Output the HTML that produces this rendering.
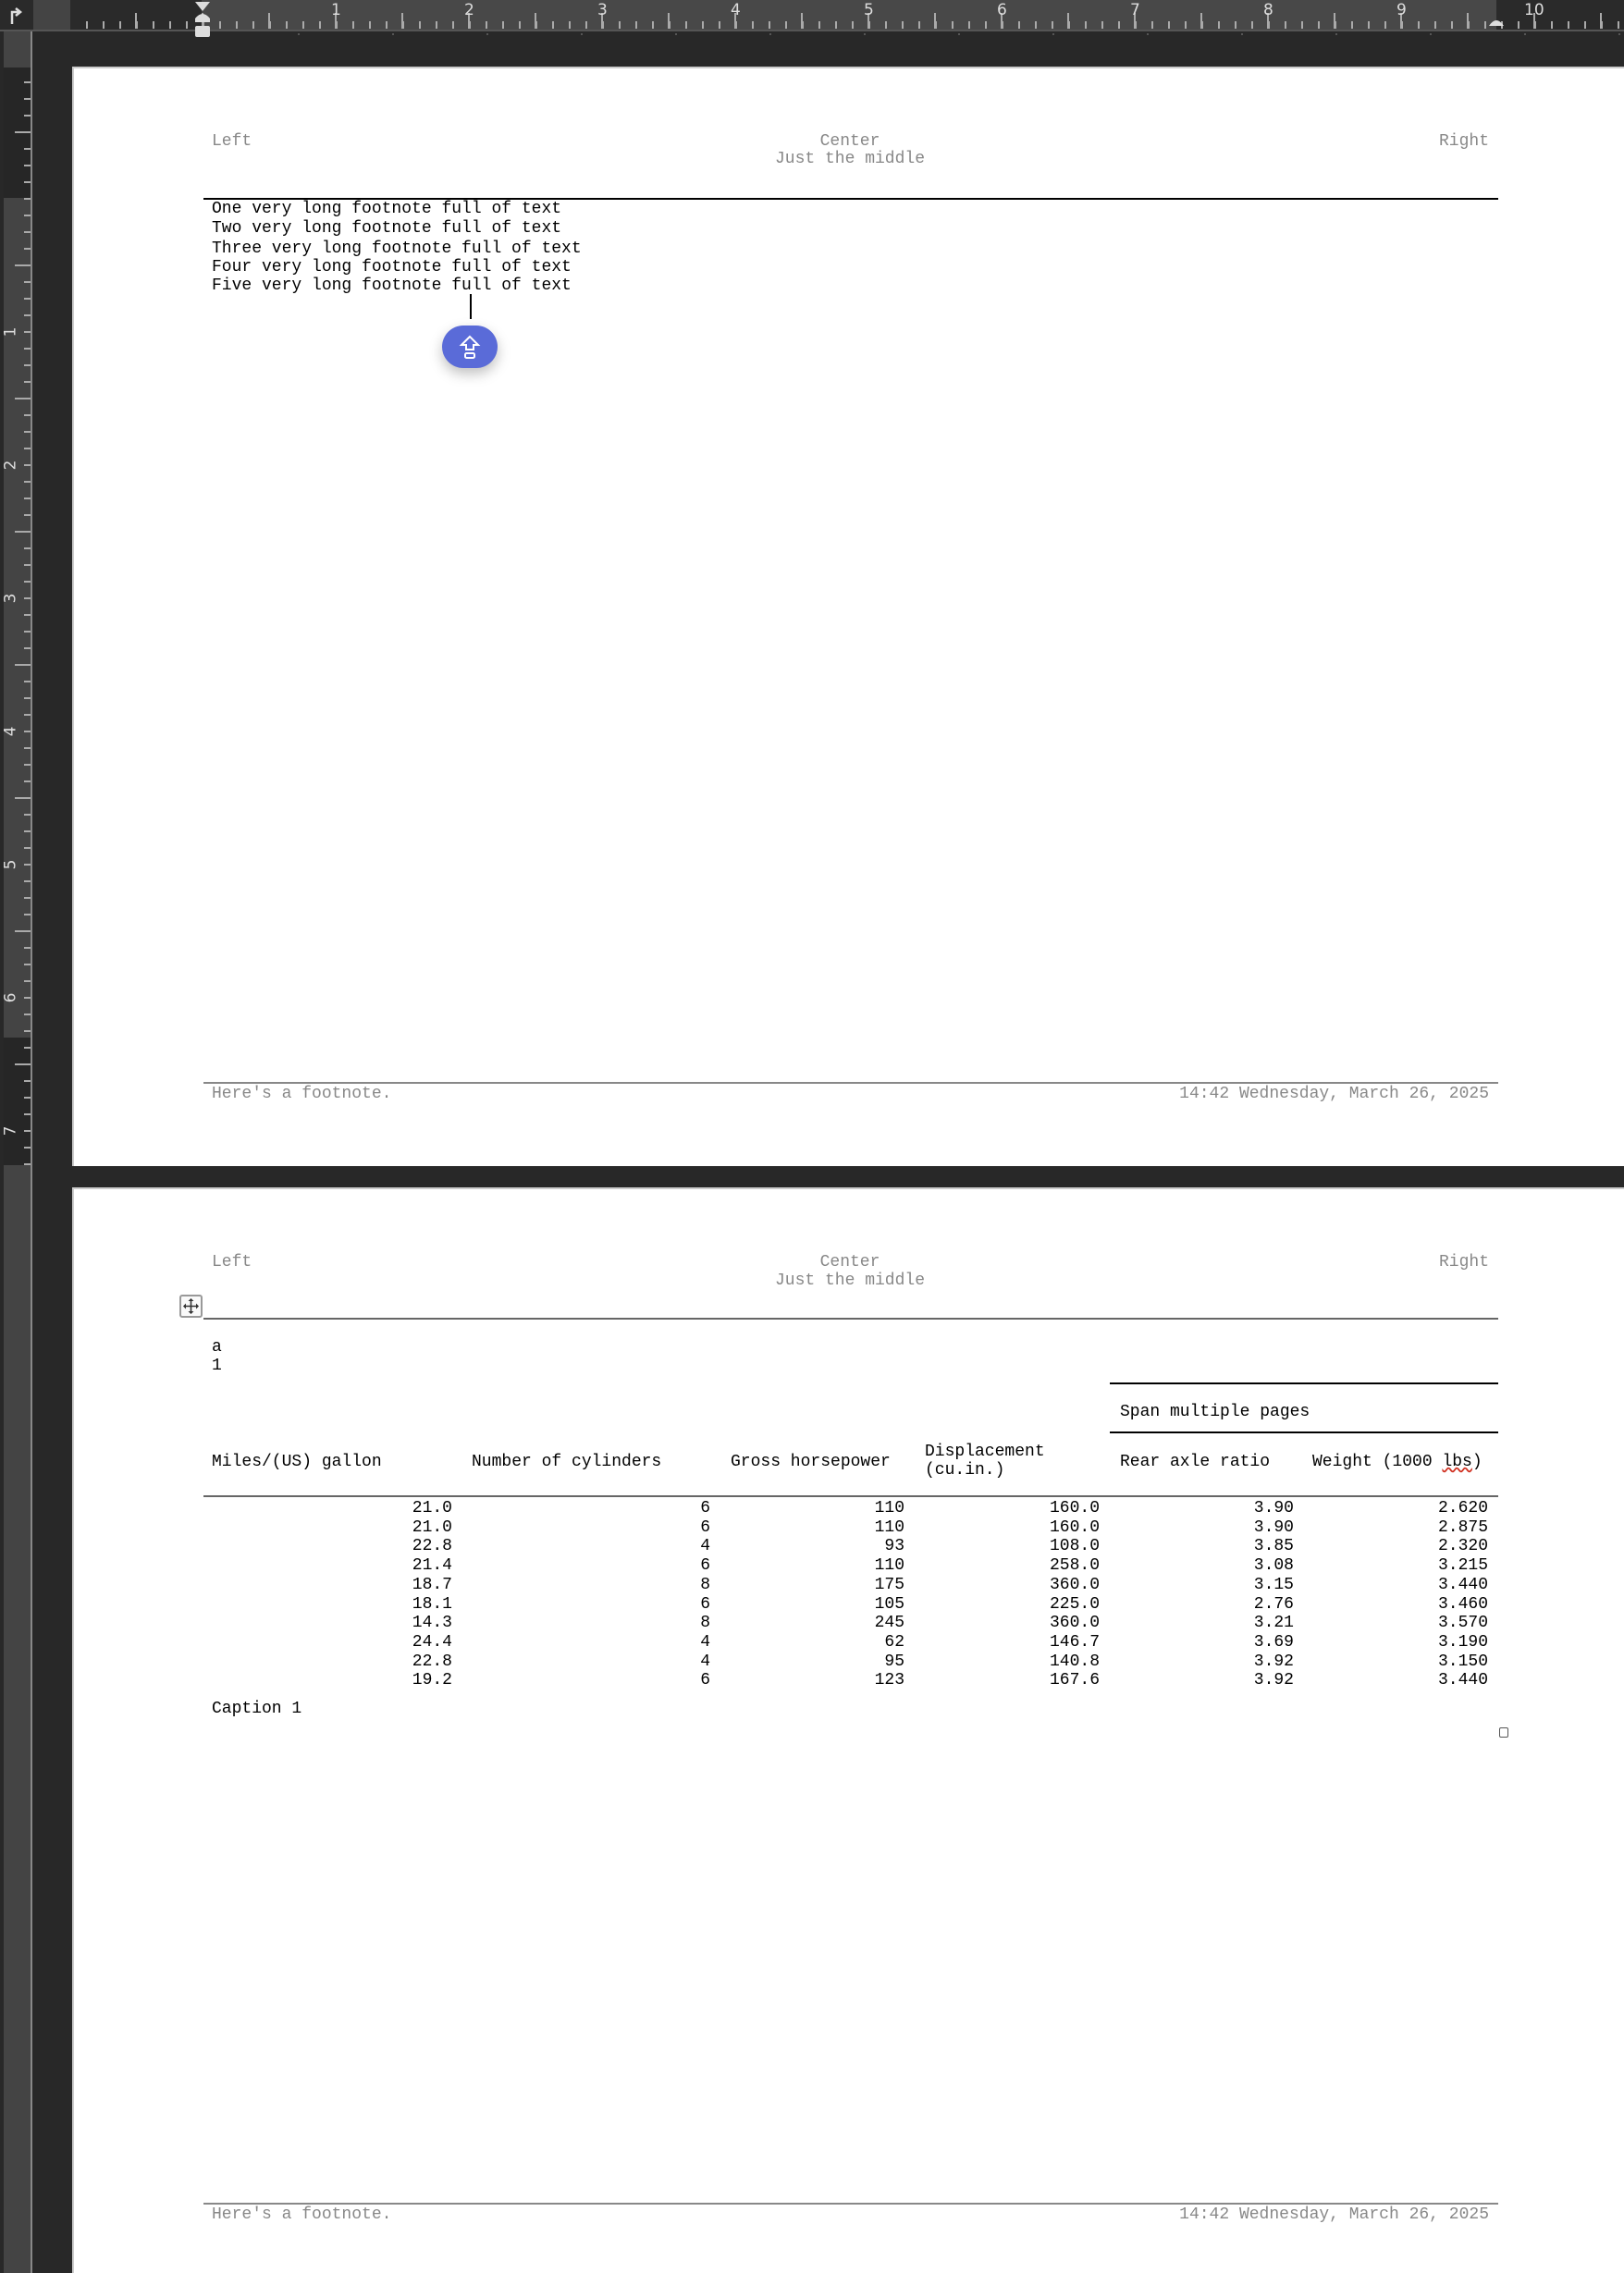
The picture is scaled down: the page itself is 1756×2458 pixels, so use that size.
<!DOCTYPE html>
<html><head><meta charset="utf-8"><style>
*{margin:0;padding:0;box-sizing:border-box}
body{width:1756px;height:2458px;background:#282828;position:relative;overflow:hidden;font-family:"Liberation Mono",monospace;font-size:18px}
.a{position:absolute;white-space:pre;line-height:20px;padding-top:2px}
.g{color:#888}
.r{text-align:right}
.page{position:absolute;left:78px;right:0;background:#fff;border-left:2px solid #ccc;border-top:2px solid #ccc}
.hr{position:absolute;height:2px;background:#000}
.num{position:absolute;color:#ddd;font-family:"DejaVu Sans","Liberation Sans",sans-serif;font-size:17px;line-height:20px}
</style></head><body>
<!-- top ruler -->
<div style="position:absolute;left:0;top:0;width:1756px;height:34px;background:#2a2a2a;border-bottom:2px solid #555"></div>
<div style="position:absolute;left:36px;top:0;width:40px;height:32px;background:#444"></div>
<div style="position:absolute;left:218px;top:0;width:1400px;height:32px;background:#484848"></div>
<div style="position:absolute;left:93px;top:23px;width:1663px;height:8px;background:repeating-linear-gradient(90deg,#aaa 0 2px,transparent 2px 18px)"></div>
<div style="position:absolute;left:146px;top:14px;width:1610px;height:17px;background:repeating-linear-gradient(90deg,#aaa 0 2px,transparent 2px 72px)"></div>
<div class="num" style="left:358px;top:1px">1</div><div class="num" style="left:502px;top:1px">2</div><div class="num" style="left:646px;top:1px">3</div><div class="num" style="left:790px;top:1px">4</div><div class="num" style="left:934px;top:1px">5</div><div class="num" style="left:1078px;top:1px">6</div><div class="num" style="left:1222px;top:1px">7</div><div class="num" style="left:1366px;top:1px">8</div><div class="num" style="left:1510px;top:1px">9</div><div class="num" style="left:1648px;top:1px">10</div>
<div style="position:absolute;left:120px;top:36px;width:1636px;height:2px;background:repeating-linear-gradient(90deg,transparent 0 100px,#555 100px 102px)"></div>
<svg style="position:absolute;left:0;top:0" width="1756" height="45">
<path d="M211 2h16l-8 10z M211 20 q8-10 16 0v4h-16z" fill="#ddd"/><rect x="211" y="28" width="16" height="12" rx="2" fill="#ddd"/>
<path d="M1610 28q8-12 16 0z" fill="#ddd"/>
<path d="M13 26V13h8M17 9l5 4-5 4" stroke="#ddd" stroke-width="2.5" fill="none"/>
</svg>
<!-- left ruler -->
<div style="position:absolute;left:4px;top:34px;width:31px;height:2424px;background:#444;border-right:2px solid #888"></div>
<div style="position:absolute;left:4px;top:73px;width:29px;height:141px;background:#262626"></div>
<div style="position:absolute;left:4px;top:1122px;width:29px;height:138px;background:#262626"></div>
<div style="position:absolute;left:26px;top:88px;width:7px;height:1172px;background:repeating-linear-gradient(180deg,#aaa 0 2px,transparent 2px 18px)"></div>
<div style="position:absolute;left:16px;top:142px;width:17px;height:1118px;background:repeating-linear-gradient(180deg,#aaa 0 2px,transparent 2px 144px)"></div>
<div class="num" style="left:6px;top:349px;transform:rotate(-90deg)">1</div><div class="num" style="left:6px;top:493px;transform:rotate(-90deg)">2</div><div class="num" style="left:6px;top:637px;transform:rotate(-90deg)">3</div><div class="num" style="left:6px;top:781px;transform:rotate(-90deg)">4</div><div class="num" style="left:6px;top:925px;transform:rotate(-90deg)">5</div><div class="num" style="left:6px;top:1069px;transform:rotate(-90deg)">6</div><div class="num" style="left:6px;top:1213px;transform:rotate(-90deg)">7</div>
<!-- page 1 -->
<div class="page" style="top:72px;height:1189px"></div>
<div class="a g" style="left:229px;top:141px">Left</div>
<div class="a g" style="left:619px;top:141px;width:600px;text-align:center">Center</div>
<div class="a g" style="left:619px;top:160px;width:600px;text-align:center">Just the middle</div>
<div class="a g r" style="left:1210px;top:141px;width:400px">Right</div>
<div class="hr" style="left:220px;top:214px;width:1400px"></div>
<div class="a" style="left:229px;top:214px">One very long footnote full of text</div>
<div class="a" style="left:229px;top:235px">Two very long footnote full of text</div>
<div class="a" style="left:229px;top:257px">Three very long footnote full of text</div>
<div class="a" style="left:229px;top:277px">Four very long footnote full of text</div>
<div class="a" style="left:229px;top:297px">Five very long footnote full of text</div>
<div style="position:absolute;left:508px;top:318px;width:2px;height:27px;background:#000"></div>
<div style="position:absolute;left:478px;top:352px;width:60px;height:46px;border-radius:23px;background:#5a6bd8;box-shadow:0 6px 14px rgba(0,0,0,.25)"></div>
<svg style="position:absolute;left:478px;top:352px" width="60" height="46"><path d="M30 12l-9 9h5v5h8v-5h5z" fill="none" stroke="#fff" stroke-width="2"/><rect x="25" y="30" width="10" height="5" rx="1.5" fill="none" stroke="#fff" stroke-width="2"/></svg>
<div style="position:absolute;left:220px;top:1170px;width:1400px;height:2px;background:#888"></div>
<div class="a g" style="left:229px;top:1171px">Here's a footnote.</div>
<div class="a g r" style="left:1110px;top:1171px;width:500px">14:42 Wednesday, March 26, 2025</div>
<!-- page 2 -->
<div class="page" style="top:1284px;height:1174px"></div>
<div class="a g" style="left:229px;top:1353px">Left</div>
<div class="a g" style="left:619px;top:1353px;width:600px;text-align:center">Center</div>
<div class="a g" style="left:619px;top:1373px;width:600px;text-align:center">Just the middle</div>
<div class="a g r" style="left:1210px;top:1353px;width:400px">Right</div>
<div style="position:absolute;left:194px;top:1400px;width:25px;height:25px;border:2px solid #999;border-radius:3px;background:#fafafa"></div>
<svg style="position:absolute;left:194px;top:1400px" width="25" height="25"><path d="M12.5 5v15M5 12.5h15" stroke="#333" stroke-width="1.6"/><path d="M12.5 4l-3 3h6zM12.5 21l-3-3h6zM4 12.5l3-3v6zM21 12.5l-3-3v6z" fill="#333"/></svg>
<div style="position:absolute;left:220px;top:1425px;width:1400px;height:2px;background:#666"></div>
<div class="a" style="left:229px;top:1445px">a</div>
<div class="a" style="left:229px;top:1465px">1</div>
<div class="hr" style="left:1200px;top:1495px;width:420px"></div>
<div class="a" style="left:1211px;top:1515px">Span multiple pages</div>
<div class="hr" style="left:1200px;top:1548px;width:420px"></div>
<div class="a" style="left:229px;top:1569px">Miles/(US) gallon</div>
<div class="a" style="left:510px;top:1569px">Number of cylinders</div>
<div class="a" style="left:790px;top:1569px">Gross horsepower</div>
<div class="a" style="left:1000px;top:1558px">Displacement</div>
<div class="a" style="left:1000px;top:1578px">(cu.in.)</div>
<div class="a" style="left:1211px;top:1569px">Rear axle ratio</div>
<div class="a" style="left:1419px;top:1569px">Weight (1000 <span style="text-decoration:underline wavy #d03020">lbs</span>)</div>
<div style="position:absolute;left:220px;top:1617px;width:1400px;height:2px;background:#666"></div>
<div class="a r" style="left:389px;top:1619px;width:100px;line-height:20.7px">21.0
21.0
22.8
21.4
18.7
18.1
14.3
24.4
22.8
19.2</div>
<div class="a r" style="left:668px;top:1619px;width:100px;line-height:20.7px">6
6
4
6
8
6
8
4
4
6</div>
<div class="a r" style="left:878px;top:1619px;width:100px;line-height:20.7px">110
110
93
110
175
105
245
62
95
123</div>
<div class="a r" style="left:1089px;top:1619px;width:100px;line-height:20.7px">160.0
160.0
108.0
258.0
360.0
225.0
360.0
146.7
140.8
167.6</div>
<div class="a r" style="left:1299px;top:1619px;width:100px;line-height:20.7px">3.90
3.90
3.85
3.08
3.15
2.76
3.21
3.69
3.92
3.92</div>
<div class="a r" style="left:1509px;top:1619px;width:100px;line-height:20.7px">2.620
2.875
2.320
3.215
3.440
3.460
3.570
3.190
3.150
3.440</div>
<div class="a" style="left:229px;top:1836px">Caption 1</div>
<div style="position:absolute;left:1621px;top:1868px;width:10px;height:11px;border:1.5px solid #555;border-radius:2px"></div>
<div style="position:absolute;left:220px;top:2382px;width:1400px;height:2px;background:#888"></div>
<div class="a g" style="left:229px;top:2383px">Here's a footnote.</div>
<div class="a g r" style="left:1110px;top:2383px;width:500px">14:42 Wednesday, March 26, 2025</div>
</body></html>
